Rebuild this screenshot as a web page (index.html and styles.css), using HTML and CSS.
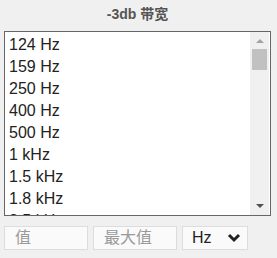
FILE: index.html
```html
<!DOCTYPE html>
<html lang="en">
<head>
    <meta charset="UTF-8">
    <title>-3db 带宽</title>
    <link rel="stylesheet" href="styles.css">
</head>
<body>
<div class="panel">
    <div class="title">-3db 带宽</div>
    <div class="listbox">
        <div class="options">
            <div class="option">124 Hz</div>
            <div class="option">159 Hz</div>
            <div class="option">250 Hz</div>
            <div class="option">400 Hz</div>
            <div class="option">500 Hz</div>
            <div class="option">1 kHz</div>
            <div class="option">1.5 kHz</div>
            <div class="option">1.8 kHz</div>
            <div class="option">2.5 kHz</div>
        </div>
        <div class="scrollbar">
            <div class="arrow up"></div>
            <div class="thumb"></div>
            <div class="track"></div>
            <div class="arrow down"></div>
        </div>
    </div>
    <div class="filters">
        <input class="field" type="text" placeholder="值">
        <input class="field" type="text" placeholder="最大值">
        <div class="unit">
            <span>Hz</span>
            <svg width="14" height="10" viewBox="0 0 14 10"><path d="M2 2 L7 7 L12 2" fill="none" stroke="#222" stroke-width="3"/></svg>
        </div>
    </div>
</div>
</body>
</html>
```
FILE: styles.css
```css
* {
    margin: 0;
    padding: 0;
    box-sizing: border-box;
}

body {
    background: #f0f0f0;
    font-family: 'Liberation Sans', Arial, 'Noto Sans CJK SC', sans-serif;
    color: #222;
}

.panel {
    width: 277px;
    height: 258px;
    padding: 0 6px 0 4px;
}

.title {
    height: 31px;
    line-height: 28px;
    text-align: center;
    font-size: 14px;
    font-weight: bold;
    color: #555;
}

.listbox {
    display: flex;
    height: 185px;
    background: #fff;
    border: 1px solid #666;
    overflow: hidden;
}

.options {
    flex: 1;
    padding: 2px 0 0 4px;
    font-size: 16px;
    line-height: 22px;
}

.scrollbar {
    width: 19px;
    display: flex;
    flex-direction: column;
    align-items: center;
    background: #f0f0f0;
    margin-right: 1px;
}

.arrow {
    width: 0;
    height: 0;
    border-left: 4px solid transparent;
    border-right: 4px solid transparent;
}

.arrow.up {
    margin: 7px 0 6px;
    border-bottom: 4px solid #a3a3a3;
}

.arrow.down {
    margin: 0 0 7px;
    border-top: 4px solid #505050;
}

.thumb {
    width: 15px;
    height: 21px;
    background: #c1c1c1;
}

.track {
    flex: 1;
}

.filters {
    display: flex;
    gap: 5px;
    margin-top: 10px;
}

.field {
    width: 84px;
    height: 24px;
    border: 1px solid #ddd;
    background: #fafafa;
    padding: 0 0 0 10px;
    font-family: 'Liberation Sans', Arial, 'Noto Sans CJK SC', sans-serif;
    font-size: 16px;
}

.field::placeholder {
    color: #999;
}

.unit {
    width: 66px;
    height: 24px;
    border: 1px solid #ddd;
    background: #fafafa;
    display: flex;
    align-items: center;
    justify-content: space-between;
    padding: 0 6px 0 9px;
    font-size: 16px;
    color: #222;
}
```
